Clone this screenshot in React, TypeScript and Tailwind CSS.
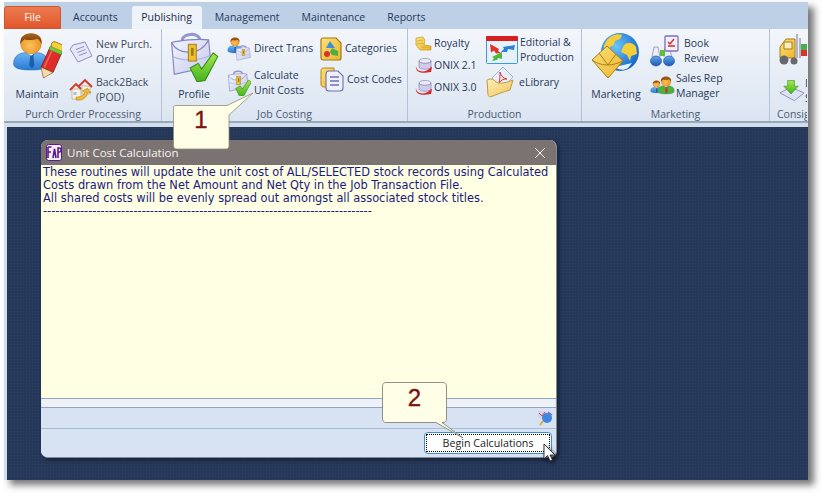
const ui = { fontFamily: '"Open Sans", "Noto Sans", sans-serif' };

function Defs() {
  return (
    <svg width="0" height="0" className="absolute">
      <defs>
        <radialGradient id="skin" cx="45%" cy="60%" r="65%">
          <stop offset="0" stopColor="#fcc35a" />
          <stop offset="1" stopColor="#ea8a1c" />
        </radialGradient>
        <linearGradient id="suit" x1="0" y1="0" x2="0" y2="1">
          <stop offset="0" stopColor="#69b4f2" />
          <stop offset="1" stopColor="#2a78d4" />
        </linearGradient>
        <linearGradient id="hair" x1="0" y1="0" x2="0" y2="1">
          <stop offset="0" stopColor="#a9651f" />
          <stop offset="1" stopColor="#6d3a0c" />
        </linearGradient>
        <linearGradient id="caseBody" x1="0" y1="0" x2="1" y2="1">
          <stop offset="0" stopColor="#f4f5fd" />
          <stop offset="1" stopColor="#c5c8ee" />
        </linearGradient>
        <linearGradient id="tick" x1="0" y1="0" x2="0" y2="1">
          <stop offset="0" stopColor="#a4ea4a" />
          <stop offset="1" stopColor="#45b21e" />
        </linearGradient>
        <linearGradient id="gold" x1="0" y1="0" x2="1" y2="1">
          <stop offset="0" stopColor="#fbe27a" />
          <stop offset="1" stopColor="#eeb52c" />
        </linearGradient>
        <radialGradient id="sea" cx="40%" cy="35%" r="70%">
          <stop offset="0" stopColor="#6cc4f8" />
          <stop offset="1" stopColor="#0f63c8" />
        </radialGradient>
        <linearGradient id="folder" x1="0" y1="0" x2="1" y2="1">
          <stop offset="0" stopColor="#fdf0b8" />
          <stop offset="1" stopColor="#eec45c" />
        </linearGradient>
        <linearGradient id="lens" x1="0" y1="0" x2="0" y2="1">
          <stop offset="0" stopColor="#63a8ec" />
          <stop offset="1" stopColor="#1a58b8" />
        </linearGradient>
      </defs>
    </svg>
  );
}

function Person({ size = 24, tie = '#1c5fa8', body = 'url(#suit)' }: { size?: number; tie?: string; body?: string }) {
  return (
    <g transform={`scale(${size / 24})`}>
      <path d="M1 20c0-5 4-7 8-7h6c4 0 8 2 8 7 0 3-4 4-11 4S1 23 1 20z" fill={body} stroke="#1c5fa8" strokeWidth=".3" />
      <path d="M9.500 13h5l-1 2 .6 6-1.600 2-1.600-2 .6-6z" fill={tie} />
      <path d="M9 13l3 2 3-2-1-1h-4z" fill="#eef4fb" />
      <ellipse cx="12" cy="7.500" rx="6.500" ry="6.300" fill="url(#skin)" stroke="#b5701a" strokeWidth=".3" />
      <path d="M5.300 7.500C4.800 3 8 .800 12 .800s7.300 2.200 6.700 6.700c-.8-1.700-1.500-2.700-2.700-3.300-2.500 1-6 1.200-8 .3-1.200.8-2 1.600-2.700 3z" fill="url(#hair)" />
    </g>
  );
}

function MaintainIcon() {
  return (
    <svg width="50" height="48" viewBox="0 0 50 48">
      <Person size={38} />
      <g transform="rotate(24 40 28)">
        <rect x="33" y="10" width="13" height="7" rx="3" fill="#f6cf3a" stroke="#8a5a10" strokeWidth=".7" />
        <rect x="33" y="17" width="13" height="22" fill="#df2b2a" stroke="#7e1414" strokeWidth=".7" />
        <path d="M36 18v20" stroke="#f26a5a" strokeWidth="1.500" />
        <rect x="33" y="16" width="13" height="3.500" fill="#76c83e" stroke="#3d8a1a" strokeWidth=".4" />
        <path d="M33 39h13l-6.500 9z" fill="#f4dcb2" stroke="#8a5a10" strokeWidth=".6" />
      </g>
    </svg>
  );
}

function DocIcon() {
  return (
    <svg width="24" height="22" viewBox="0 0 24 22">
      <path d="M1 8 4 4l12-3 7 14-14 6z" fill="#e6e7f8" stroke="#8d90c4" />
      <path d="M7 8.500l8-3M8.500 11.500l8-3M10 14.500l8-3" stroke="#8d90c4" />
    </svg>
  );
}

function HouseIcon() {
  return (
    <svg width="24" height="24" viewBox="0 0 24 24">
      <path d="M3 11h9v10H3z" fill="#f9f2e4" stroke="#a58a5a" strokeWidth=".5" />
      <path d="M13 8h8v8h-8z" fill="#f9f2e4" stroke="#a58a5a" strokeWidth=".5" />
      <path d="M1 12 7 6l5 5M10 8l6-6 7 7" fill="none" stroke="#d03a2c" strokeWidth="1.900" />
      <path d="M7 22c6 1 11-2 12-8l3 1-3.500-5-5 3 2.500 1c-1 3-4 5-9 5z" fill="#eeb92e" stroke="#a9791a" strokeWidth=".5" />
      <rect x="4.500" y="14" width="3" height="3" fill="#9cc2ea" />
    </svg>
  );
}

function Case({ size }: { size: number }) {
  return (
    <g transform={`scale(${size / 50})`}>
      <path d="M15 10c0-9 19-10 20-1" fill="none" stroke="#9597cc" strokeWidth="3.500" />
      <path d="M3 12c8-2 30-5 42-3l3 30-42 9z" fill="url(#caseBody)" stroke="#8385bd" strokeWidth="1.300" />
      <path d="M3 12c6 14 32 16 42-3" fill="none" stroke="#8385bd" strokeWidth="1.300" />
      <path d="M5 28c10 5 28 5 41-1" fill="none" stroke="#b0b3df" strokeWidth="1.300" />
      <rect x="22" y="14" width="9" height="19" fill="#efc12f" stroke="#a27c14" strokeWidth="1.100" />
      <path d="M25 18h3v9h-3z" fill="#a27c14" />
    </g>
  );
}

function Check({ x, y, s }: { x: number; y: number; s: number }) {
  return (
    <path
      transform={`translate(${x} ${y}) scale(${s})`}
      d="M1 13 8 9l3 5L21 0l4 3-11 21-7 1z"
      fill="url(#tick)"
      stroke="#2f8a14"
      strokeWidth=".9"
    />
  );
}

function ProfileIcon() {
  return (
    <svg width="50" height="50" viewBox="0 0 50 50">
      <Case size={44} />
      <Check x={20} y={21} s={1.150} />
    </svg>
  );
}

function DirectIcon() {
  return (
    <svg width="24" height="24" viewBox="0 0 24 24">
      <Person size={16} />
      <g transform="translate(8 8)"><Case size={16} /></g>
    </svg>
  );
}

function CalcIcon() {
  return (
    <svg width="24" height="26" viewBox="0 0 24 26">
      <Case size={22} />
      <Check x={8} y={10} s={0.65} />
    </svg>
  );
}

function CategoriesIcon() {
  return (
    <svg width="22" height="24" viewBox="0 0 22 24">
      <path d="M3 1h13l5 5v15c0 1-1 2-2 2H3c-1 0-2-1-2-2V3c0-1 1-2 2-2z" fill="url(#gold)" stroke="#a8751a" strokeWidth="1.200" />
      <path d="M10 4l5 7H6z" fill="#3e8fd8" />
      <circle cx="7" cy="17" r="3" fill="#d8342c" />
      <path d="M12 11l6 3v5l-6-1-2-3z" fill="#48b04a" />
    </svg>
  );
}

function CostCodesIcon() {
  return (
    <svg width="24" height="25" viewBox="0 0 24 25">
      <path d="M1 4c0-2 1-3 3-3h10v19H4c-2 0-3-1-3-3z" fill="url(#gold)" stroke="#b5841c" />
      <path d="M6 7c0-2 1-3 3-3h9l5 5v12c0 2-1 3-3 3H9c-2 0-3-1-3-3z" fill="#eef0fb" stroke="#6d70b0" strokeWidth="1.100" />
      <path d="M10 10h9M10 14h9M10 18h9" stroke="#6d70b0" strokeWidth="1.300" />
    </svg>
  );
}

function RoyaltyIcon() {
  return (
    <svg width="17" height="15" viewBox="0 0 17 15">
      <path d="M1 2l7-1 2 3-1 5 7 1v4H5L1 9z" fill="url(#gold)" stroke="#c49a22" strokeWidth=".7" />
      <path d="M2 5l6-1M2 8l7-1M6 11h10" stroke="#c49a22" strokeWidth=".6" />
    </svg>
  );
}

function OnixIcon() {
  return (
    <svg width="18" height="15" viewBox="0 0 18 15">
      <ellipse cx="10" cy="3" rx="6" ry="2.500" fill="#ecebf8" stroke="#8a86b8" strokeWidth=".7" />
      <path d="M4 3v6c0 3 12 3 12 0V3c0 3-12 3-12 0z" fill="#cfcbe8" stroke="#8a86b8" strokeWidth=".7" />
      <path d="M1 8c0 6 9 7 13 3l2-2 1 .5-1 4.500-4 .5C6 15.500 0 14 1 8z" fill="#d8282c" />
    </svg>
  );
}

function EditorialIcon() {
  return (
    <svg width="32" height="28" viewBox="0 0 32 28">
      <rect x=".500" y=".500" width="31" height="27" rx="1" fill="#e6f2fb" stroke="#3a9ae0" />
      <rect x="0" y="0" width="32" height="5" rx="1" fill="#d81e1e" />
      <path d="M4 8l9 5-1 2 3 2-5 .5-2-3-3 2z" fill="#e0302c" />
      <path d="M29 9 17 11l1 2-3 3h6l1-3 6 1z" fill="#2f7fd8" />
      <path d="M16 16 6 21l2 1-2 3 5-1 1-2 4 1z" fill="#4fb838" />
    </svg>
  );
}

function LibraryIcon() {
  return (
    <svg width="29" height="32" viewBox="0 0 29 32">
      <path d="M6 12 17 1l10 10-12 12z" fill="#e9effa" stroke="#8fa2c8" strokeWidth=".7" />
      <path d="M14 6c1 4 3 6 7 7-4 0-6 1-8 4 1-4 1-7 1-11z" fill="none" stroke="#d8342c" strokeWidth="1" />
      <path d="M1 14c2-1 6-2 8 1 3 3 8 3 18-1l-3 10c-8 2-14 5-20 7-1-1-2-1-2-2z" fill="url(#folder)" stroke="#c59a36" />
    </svg>
  );
}

function GlobeIcon() {
  return (
    <svg width="50" height="50" viewBox="0 0 50 50">
      <circle cx="29" cy="20" r="19" fill="url(#sea)" />
      <path d="M16 8c4-5 12-7 15-5l-2 4-5 2-1 4-4 2-1 5-5-3c-1-3 1-6 3-9zM34 12c4-2 9-1 11 3l1 7-6 2-1 5-3-6-6-3 2-5z" fill="#f5cf3a" />
      <path d="M24 35l17-4-4 5c-5 3-9 2-13-1z" fill="#eaf3fc" />
      <path d="M1 28 16 14l16 15-15 17z" fill="url(#gold)" stroke="#a77f1a" />
      <path d="M1 28c6 4 11 5 16 5 5 0 10-2 15-4M8 21l9 12 8-11" fill="none" stroke="#a77f1a" />
    </svg>
  );
}

function BookReviewIcon() {
  return (
    <svg width="29" height="32" viewBox="0 0 29 32">
      <path d="M2 22l2-10h4l2 10M14 22l1-10h4l3 10" fill="#eceDf8" stroke="#7d80b0" strokeWidth=".7" />
      <ellipse cx="6" cy="26" rx="5.500" ry="5" fill="url(#lens)" stroke="#1c4f9a" strokeWidth=".6" />
      <ellipse cx="19" cy="26" rx="5.500" ry="5" fill="url(#lens)" stroke="#1c4f9a" strokeWidth=".6" />
      <rect x="10" y="15" width="5" height="6" fill="#5fc03a" />
      <rect x="15" y="1" width="13" height="15" rx="1" fill="#f2f0fb" stroke="#7a6fc0" strokeWidth="1.300" />
      <path d="M18 7l2 2 4-5M18 11h7" fill="none" stroke="#d8282c" strokeWidth="1.400" />
    </svg>
  );
}

function SalesIcon() {
  return (
    <svg width="25" height="22" viewBox="0 0 25 22">
      <g transform="translate(0 5)"><Person size={13} /></g>
      <g transform="translate(7 1)"><Person size={18} tie="#d8282c" body="#4cb03a" /></g>
    </svg>
  );
}

function ForkliftIcon() {
  return (
    <svg width="29" height="32" viewBox="0 0 29 32">
      <path d="M18 0v24M21 4v20" stroke="#9ba1b8" strokeWidth="1.500" />
      <path d="M1 13 7 5h9v19H1z" fill="url(#gold)" stroke="#a87d18" />
      <path d="M5 8h8v7H5z" fill="#f9eebb" stroke="#a87d18" />
      <circle cx="5" cy="26" r="4.500" fill="#66676f" />
      <circle cx="15" cy="27" r="3.500" fill="#66676f" />
      <rect x="22" y="16" width="7" height="6" fill="#d8342c" />
      <rect x="22" y="10" width="7" height="6" fill="#48b04a" />
    </svg>
  );
}

function ImportIcon() {
  return (
    <svg width="26" height="22" viewBox="0 0 27 22">
      <path d="M1 13 12 7l14 6-10 8z" fill="#dfe2f4" stroke="#8d90c4" />
      <path d="M9 0h7v6h4l-7.500 8L5 6h4z" fill="url(#tick)" stroke="#2f8a14" strokeWidth=".6" />
    </svg>
  );
}

function FapLogo() {
  return (
    <svg width="16" height="17" viewBox="0 0 16 17">
      <rect x=".500" y=".500" width="15" height="16" rx="2" fill="#f4eefa" stroke="#5b1a8c" />
      <path d="M2 3h3.500M2 3v11M2 8h3M7 14l1.500-9 1.500 9M7.500 10h2M12 14V4h1.500c2 0 2 4 0 4H12" fill="none" stroke="#5b1a8c" strokeWidth="1.600" />
    </svg>
  );
}

function Small({ icon, lines, className = '', gap = 'gap-[3px]' }: { icon: React.ReactNode; lines: string[]; className?: string; gap?: string }) {
  return (
    <div className={`flex items-center ${gap} ${className}`}>
      <div className="flex shrink-0 justify-center">{icon}</div>
      <div className="leading-[15px] whitespace-nowrap">
        {lines.map((l) => (
          <div key={l}>{l}</div>
        ))}
      </div>
    </div>
  );
}

function Big({ icon, label, className = '' }: { icon: React.ReactNode; label: string; className?: string }) {
  return (
    <div className={`-mt-[1px] flex flex-col items-center ${className}`}>
      <div className="flex h-[54px] items-start justify-center">{icon}</div>
      <div className="mt-[1px] leading-[15px] whitespace-nowrap">{label}</div>
    </div>
  );
}

function Group({ label, width, children, last }: { label: string; width: string; children: React.ReactNode; last?: boolean }) {
  return (
    <div className={`relative flex shrink-0 flex-col overflow-hidden ${width} ${last ? '' : 'border-r border-[#b3c2d6]'}`}>
      <div className="flex h-[78px] shrink-0 pt-[4px]">{children}</div>
      <div className={`h-[14px] shrink-0 leading-[15px] text-[#4a5a72] whitespace-nowrap ${last ? 'pl-[7px]' : 'text-center'}`}>{label}</div>
    </div>
  );
}

function Tab({ children, className = '' }: { children: React.ReactNode; className?: string }) {
  return <div className={`flex items-center text-[#27385a] ${className}`}>{children}</div>;
}

export default function App() {
  const line = '--------------------------------------------------------------------------------';
  return (
    <div className="relative h-[494px] w-[822px] overflow-hidden bg-white text-[10.500px] text-[#27385a]" style={ui}>
      <Defs />
      <div className="ml-[4px] mt-[2px] flex h-[478px] w-[804px] flex-col bg-[#d2deec] shadow-[6px_5px_7px_rgba(60,60,60,0.7)]">
        {/* tabs */}
        <div className="flex h-[27px] shrink-0 items-end bg-[#bdd0e6]">
          <div className="flex h-[23px] w-[57px] items-center justify-center rounded-t-[3px] border border-[#c9582f] bg-gradient-to-b from-[#ec7a50] to-[#e2562a] text-white">File</div>
          <Tab className="ml-[12px] h-[22px]">Accounts</Tab>
          <div className="ml-[14px] flex h-[23px] w-[70px] items-center justify-center rounded-t-[3px] bg-[#eef3fa] text-[#1d2b44]">Publishing</div>
          <Tab className="ml-[13px] h-[22px]">Management</Tab>
          <Tab className="ml-[22px] h-[22px]">Maintenance</Tab>
          <Tab className="ml-[22px] h-[22px]">Reports</Tab>
        </div>

        {/* ribbon */}
        <div className="flex h-[94px] shrink-0 border-b-2 border-[#98a8bb] bg-gradient-to-b from-[#f3f6fb] to-[#dbe5f1] pl-[1px]">
          <Group label="Purch Order Processing" width="w-[157px]">
            <Big icon={<MaintainIcon />} label="Maintain" className="ml-[6px] w-[52px]" />
            <div className="ml-[6px] flex flex-col gap-[5px] pt-[3px] text-[#3d4a60]">
              <Small icon={<DocIcon />} lines={['New Purch.', 'Order']} className="h-[32px]" />
              <Small icon={<HouseIcon />} lines={['Back2Back', '(POD)']} className="h-[34px]" />
            </div>
          </Group>
          <Group label="Job Costing" width="w-[246px]">
            <Big icon={<ProfileIcon />} label="Profile" className="ml-[7px] w-[50px]" />
            <div className="ml-[8px] flex w-[93px] flex-col gap-[5px] pt-[2px]">
              <Small icon={<DirectIcon />} lines={['Direct Trans']} className="h-[27px]" />
              <Small icon={<CalcIcon />} lines={['Calculate', 'Unit Costs']} className="h-[32px]" />
            </div>
            <div className="flex flex-col gap-[6px] pt-[3px]">
              <Small icon={<CategoriesIcon />} lines={['Categories']} className="h-[25px]" />
              <Small icon={<CostCodesIcon />} lines={['Cost Codes']} className="h-[25px]" />
            </div>
          </Group>
          <Group label="Production" width="w-[174px]">
            <div className="ml-[7px] flex w-[71px] flex-col gap-[7px] pt-[3px]">
              <Small icon={<RoyaltyIcon />} lines={['Royalty']} gap="gap-[2px]" className="h-[15px]" />
              <Small icon={<OnixIcon />} lines={['ONIX 2.1']} gap="gap-[1px]" className="h-[15px]" />
              <Small icon={<OnixIcon />} lines={['ONIX 3.0']} gap="gap-[1px]" className="h-[15px]" />
            </div>
            <div className="flex flex-col gap-[1px] pt-[2px]">
              <Small icon={<EditorialIcon />} lines={['Editorial &', 'Production']} gap="gap-[2px]" className="h-[30px]" />
              <Small icon={<LibraryIcon />} lines={['eLibrary']} gap="gap-[4px]" className="h-[32px]" />
            </div>
          </Group>
          <Group label="Marketing" width="w-[188px]">
            <Big icon={<GlobeIcon />} label="Marketing" className="ml-[8px] w-[52px]" />
            <div className="ml-[8px] flex flex-col gap-[4px] pt-[1px]">
              <Small icon={<BookReviewIcon />} lines={['Book', 'Review']} gap="gap-[5px]" className="h-[33px]" />
              <Small icon={<SalesIcon />} lines={['Sales Rep', 'Manager']} gap="gap-[1px]" className="h-[30px]" />
            </div>
          </Group>
          <Group label="Consig" width="w-[37px]" last>
            <div className="flex flex-col gap-[10px] pl-[9px] pt-[1px]">
              <ForkliftIcon />
              <Small icon={<ImportIcon />} lines={['I', 'S']} gap="gap-0" />
            </div>
          </Group>
        </div>

        {/* workspace */}
        <div className="mt-[4px] min-h-0 flex-1 pl-[3px]">
          <div className="h-full bg-[#26385a] bg-[radial-gradient(#2d4164_1px,transparent_1px)] bg-[length:3px_3px] pl-[34px] pt-[13px]">
            <div className="flex h-[318px] w-[516px] flex-col overflow-hidden rounded-[7px] border-r border-b border-[#7f8c9e] bg-[#d7e3f3] shadow-[2px_2px_4px_rgba(0,0,0,0.45)]">
              <div className="flex h-[25px] shrink-0 items-center bg-[#7b7272] pl-[5px] pr-[10px] text-white">
                <FapLogo />
                <div className="ml-[5px] flex-1 pt-[1px] text-[11.500px] text-[#f4f4f4]">Unit Cost Calculation</div>
                <svg width="12" height="12" viewBox="0 0 12 12">
                  <path d="M1 1l10 10M11 1 1 11" stroke="#f2f2f2" strokeWidth="1" />
                </svg>
              </div>
              <div className="h-[233px] shrink-0 overflow-hidden bg-[#ffffe3] pl-[2px] text-[11.400px] leading-[13px] text-[#1b1b80]" style={{ fontFamily: '"DejaVu Sans", sans-serif' }}>
                <div className="pt-[1px] whitespace-nowrap">These routines will update the unit cost of ALL/SELECTED stock records using Calculated</div>
                <div className="whitespace-nowrap">Costs drawn from the Net Amount and Net Qty in the Job Transaction File.</div>
                <div className="whitespace-nowrap">All shared costs will be evenly spread out amongst all associated stock titles.</div>
                <div className="whitespace-nowrap">{line}</div>
              </div>
              <div className="flex h-[10px] shrink-0 border-y border-[#8fa6c6] bg-[#dfe8f4] px-[1px]">
                <div className="h-full flex-1 rounded-[2px] bg-[#eef1f6]" />
              </div>
              <div className="flex h-[21px] shrink-0 items-center justify-end border-b border-[#a9bdd8] bg-[#d7e3f3] pr-[2px]">
                <svg width="18" height="18" viewBox="0 0 18 18">
                  <path d="M2 2h8v7H2z" fill="#d9cfe6" />
                  <path d="M3 4l3 3 3-4" fill="none" stroke="#c0485a" strokeWidth="1" />
                  <circle cx="11" cy="9" r="5" fill="#3d86de" />
                  <path d="M7 12l-3 4" stroke="#e0a83a" strokeWidth="2" />
                  <path d="M12 3l4 3" stroke="#7a6fc0" strokeWidth="1.500" />
                </svg>
              </div>
              <div className="flex flex-1 items-start justify-end bg-[#d7e3f3] pr-[4px] pt-[3px]">
                <div className="rounded-[4px] border border-[#3e8fd0] bg-white p-[1px]">
                  <div className="flex h-[18px] w-[124px] items-center justify-center border border-dotted border-black text-[10.700px] text-[#222]">Begin Calculations</div>
                </div>
              </div>
            </div>
          </div>
        </div>
      </div>

      {/* callout 1 */}
      <div className="absolute left-[173px] top-[92px] z-20 h-[60px] w-[82px]">
        <svg width="82" height="60" viewBox="0 0 82 60" className="absolute left-0 top-0">
          <path d="M3 13.500h51L80 1 56 23v31c0 2-1 3-3 3H4c-2 0-3.500-1-3.500-3V16c0-2 1-2.500 2.500-2.500z" fill="#ffffe8" stroke="#8e8e78" strokeWidth=".8" />
        </svg>
        <div className="absolute left-0 top-[15px] flex h-[26px] w-[56px] items-center justify-center text-[24px] leading-none text-[#7a1212] [-webkit-text-stroke:0.4px_#7a1212]" style={{ fontFamily: '"Liberation Sans", sans-serif' }}>1</div>
      </div>

      {/* callout 2 */}
      <div className="absolute left-[382px] top-[382px] z-20 h-[60px] w-[84px]">
        <svg width="84" height="60" viewBox="0 0 84 60" className="absolute left-0 top-0">
          <path d="M4 .500h57c2 0 3.500 1.500 3.500 3.500v33c0 2-1.500 3.500-3.500 3.500h-1L81 56 54 40.500H4c-2 0-3.500-1.500-3.500-3.500V4C.500 2 2 .500 4 .500z" fill="#ffffe8" stroke="#77776a" strokeWidth=".8" />
        </svg>
        <div className="absolute left-0 top-[3px] flex h-[26px] w-[65px] items-center justify-center text-[24px] leading-none text-[#7a1212] [-webkit-text-stroke:0.4px_#7a1212]" style={{ fontFamily: '"Liberation Sans", sans-serif' }}>2</div>
      </div>

      {/* mouse pointer */}
      <svg width="16" height="22" viewBox="0 0 16 22" className="absolute left-[543px] top-[443px] z-30 drop-shadow-[2px_2px_2px_rgba(0,0,0,0.6)]">
        <path d="M1 1v15l3.500-3.500L7 18l2.500-1-2.500-5h5z" fill="#fff" stroke="#222" strokeWidth=".9" />
      </svg>
    </div>
  );
}
